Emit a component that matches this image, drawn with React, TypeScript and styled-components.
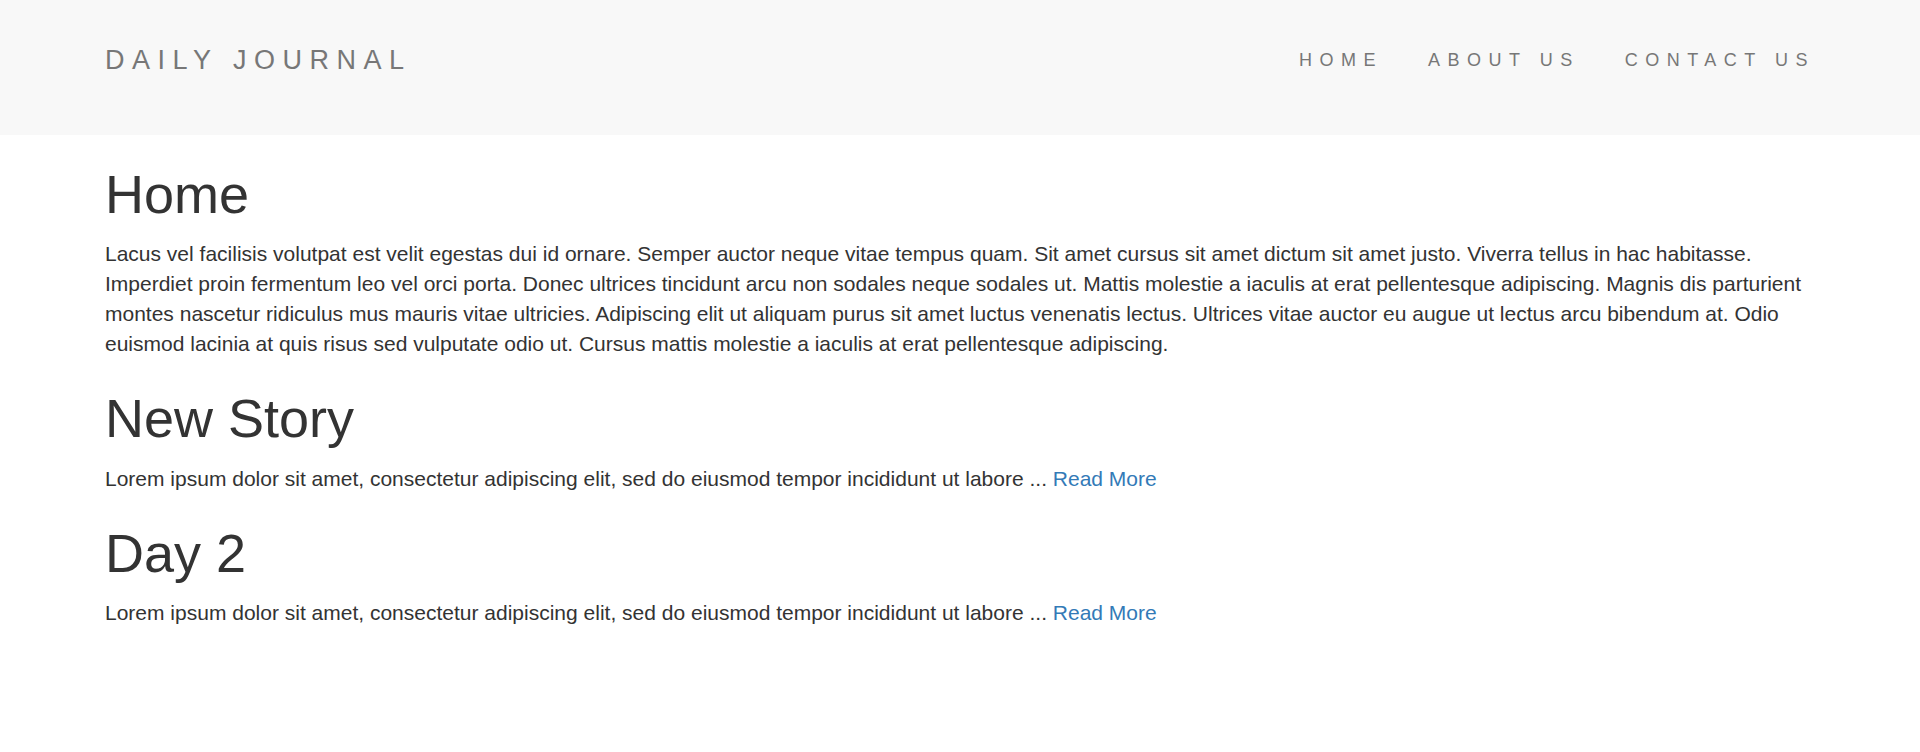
import React from "react";
import styled, { createGlobalStyle } from "styled-components";

const GlobalStyle = createGlobalStyle`
  html, body {
    margin: 0;
    padding: 0;
    background: #ffffff;
  }
  body {
    font-family: "Liberation Sans", Arial, Helvetica, sans-serif;
    font-size: 21px;
    line-height: 30px;
    color: #333333;
  }
  * { box-sizing: border-box; }
`;

const Navbar = styled.header`
  height: 135px;
  background: #f8f8f8;
  padding-top: 22.5px;
  margin-bottom: 30px;
`;

const Container = styled.div`
  width: 1755px;
  margin: 0 auto;
  padding: 0 22.5px;
`;

const NavRow = styled.div`
  display: flex;
  justify-content: space-between;
  align-items: center;
  margin: 0 -22.5px;
`;

const Brand = styled.a`
  display: block;
  padding: 22.5px;
  font-size: 27px;
  line-height: 30px;
  letter-spacing: 7.5px;
  color: #777777;
  text-decoration: none;
  text-transform: uppercase;
`;

const NavList = styled.ul`
  display: flex;
  list-style: none;
  margin: 0;
  padding: 0;
`;

const NavLink = styled.a`
  display: block;
  padding: 22.5px;
  font-size: 18px;
  line-height: 30px;
  letter-spacing: 7.5px;
  color: #777777;
  text-decoration: none;
  text-transform: uppercase;
`;

const Heading = styled.h1`
  font-family: inherit;
  font-weight: 500;
  font-size: 54px;
  line-height: 1.1;
  color: #333333;
  margin: 30px 0 15px;
`;

const Paragraph = styled.p`
  margin: 0 0 15px;
`;

const ReadMore = styled.a`
  color: #337ab7;
  text-decoration: none;
`;

const posts = [
  { title: "New Story" },
  { title: "Day 2" },
];

export default function App() {
  return (
    <>
      <GlobalStyle />
      <Navbar>
        <Container>
          <NavRow>
            <Brand href="#">Daily Journal</Brand>
            <NavList>
              <li><NavLink href="#">Home</NavLink></li>
              <li><NavLink href="#">About Us</NavLink></li>
              <li><NavLink href="#">Contact Us</NavLink></li>
            </NavList>
          </NavRow>
        </Container>
      </Navbar>
      <Container>
        <Heading>Home</Heading>
        <Paragraph>
          Lacus vel facilisis volutpat est velit egestas dui id ornare. Semper auctor neque vitae tempus quam. Sit amet cursus sit amet dictum sit amet justo. Viverra tellus in hac habitasse. Imperdiet proin fermentum leo vel orci porta. Donec ultrices tincidunt arcu non sodales neque sodales ut. Mattis molestie a iaculis at erat pellentesque adipiscing. Magnis dis parturient montes nascetur ridiculus mus mauris vitae ultricies. Adipiscing elit ut aliquam purus sit amet luctus venenatis lectus. Ultrices vitae auctor eu augue ut lectus arcu bibendum at. Odio euismod lacinia at quis risus sed vulputate odio ut. Cursus mattis molestie a iaculis at erat pellentesque adipiscing.
        </Paragraph>
        {posts.map((p) => (
          <React.Fragment key={p.title}>
            <Heading>{p.title}</Heading>
            <Paragraph>
              Lorem ipsum dolor sit amet, consectetur adipiscing elit, sed do eiusmod tempor incididunt ut labore ...{" "}
              <ReadMore href="#">Read More</ReadMore>
            </Paragraph>
          </React.Fragment>
        ))}
      </Container>
    </>
  );
}
